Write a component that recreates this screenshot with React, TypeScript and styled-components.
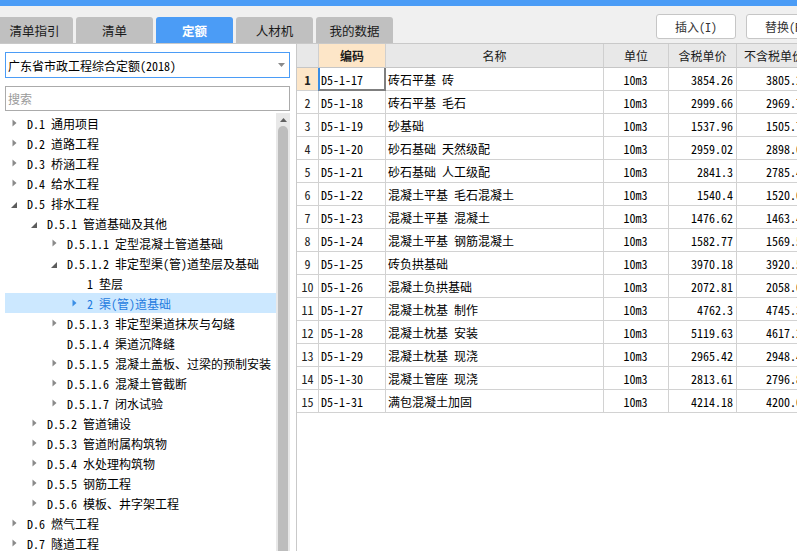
import styled, { createGlobalStyle } from "styled-components";

const FONT = `"Noto Sans Mono CJK SC", "Noto Sans CJK SC", "DejaVu Sans Mono", monospace`;

const GlobalStyle = createGlobalStyle`
  html, body {
    margin: 0;
    padding: 0;
    background: #ffffff;
    overflow: hidden;
  }
  body {
    font-family: ${FONT};
    font-size: 12px;
    color: #000;
  }
  * { box-sizing: border-box; }
`;

type Toggle = "open" | "closed" | "none";
type TreeNode = { level: number; label: string; toggle: Toggle; selected?: boolean };

const tree: TreeNode[] = [
  { level: 0, label: "D.1 通用项目", toggle: "closed" },
  { level: 0, label: "D.2 道路工程", toggle: "closed" },
  { level: 0, label: "D.3 桥涵工程", toggle: "closed" },
  { level: 0, label: "D.4 给水工程", toggle: "closed" },
  { level: 0, label: "D.5 排水工程", toggle: "open" },
  { level: 1, label: "D.5.1 管道基础及其他", toggle: "open" },
  { level: 2, label: "D.5.1.1 定型混凝土管道基础", toggle: "closed" },
  { level: 2, label: "D.5.1.2 非定型渠(管)道垫层及基础", toggle: "open" },
  { level: 3, label: "1 垫层", toggle: "none" },
  { level: 3, label: "2 渠(管)道基础", toggle: "closed", selected: true },
  { level: 2, label: "D.5.1.3 非定型渠道抹灰与勾缝", toggle: "closed" },
  { level: 2, label: "D.5.1.4 渠道沉降缝", toggle: "none" },
  { level: 2, label: "D.5.1.5 混凝土盖板、过梁的预制安装", toggle: "closed" },
  { level: 2, label: "D.5.1.6 混凝土管截断", toggle: "closed" },
  { level: 2, label: "D.5.1.7 闭水试验", toggle: "closed" },
  { level: 1, label: "D.5.2 管道铺设", toggle: "closed" },
  { level: 1, label: "D.5.3 管道附属构筑物", toggle: "closed" },
  { level: 1, label: "D.5.4 水处理构筑物", toggle: "closed" },
  { level: 1, label: "D.5.5 钢筋工程", toggle: "closed" },
  { level: 1, label: "D.5.6 模板、井字架工程", toggle: "closed" },
  { level: 0, label: "D.6 燃气工程", toggle: "closed" },
  { level: 0, label: "D.7 隧道工程", toggle: "closed" },
];

type Quota = { code: string; name: string; unit: string; tax: string; noTax: string };

const rows: Quota[] = [
  { code: "D5-1-17", name: "砖石平基 砖", unit: "10m3", tax: "3854.26", noTax: "3805.21" },
  { code: "D5-1-18", name: "砖石平基 毛石", unit: "10m3", tax: "2999.66", noTax: "2969.75" },
  { code: "D5-1-19", name: "砂基础", unit: "10m3", tax: "1537.96", noTax: "1505.77" },
  { code: "D5-1-20", name: "砂石基础 天然级配", unit: "10m3", tax: "2959.02", noTax: "2898.01" },
  { code: "D5-1-21", name: "砂石基础 人工级配", unit: "10m3", tax: "2841.3", noTax: "2785.44" },
  { code: "D5-1-22", name: "混凝土平基 毛石混凝土", unit: "10m3", tax: "1540.4", noTax: "1520.04" },
  { code: "D5-1-23", name: "混凝土平基 混凝土", unit: "10m3", tax: "1476.62", noTax: "1463.41" },
  { code: "D5-1-24", name: "混凝土平基 钢筋混凝土", unit: "10m3", tax: "1582.77", noTax: "1569.55" },
  { code: "D5-1-25", name: "砖负拱基础", unit: "10m3", tax: "3970.18", noTax: "3920.53" },
  { code: "D5-1-26", name: "混凝土负拱基础", unit: "10m3", tax: "2072.81", noTax: "2058.02" },
  { code: "D5-1-27", name: "混凝土枕基 制作", unit: "10m3", tax: "4762.3", noTax: "4745.31" },
  { code: "D5-1-28", name: "混凝土枕基 安装", unit: "10m3", tax: "5119.63", noTax: "4617.25" },
  { code: "D5-1-29", name: "混凝土枕基 现浇", unit: "10m3", tax: "2965.42", noTax: "2948.45" },
  { code: "D5-1-30", name: "混凝土管座 现浇", unit: "10m3", tax: "2813.61", noTax: "2796.82" },
  { code: "D5-1-31", name: "满包混凝土加固", unit: "10m3", tax: "4214.18", noTax: "4200.04" },
];

const tabs = ["清单指引", "清单", "定额", "人材机", "我的数据"];

export default function App() {
  return (
    <>
      <GlobalStyle />
      <Page>
        <TopBar />
        <Toolbar>
          <Tabs>
            {tabs.map((t) => (
              <Tab key={t} $active={t === "定额"}>
                {t}
              </Tab>
            ))}
          </Tabs>
          <Actions>
            <ToolButton>插入(I)</ToolButton>
            <ToolButton>替换(R)</ToolButton>
          </Actions>
        </Toolbar>
        <Main>
          <LeftPanel>
            <Combo>
              <ComboText>广东省市政工程综合定额(2018)</ComboText>
              <svg width="7" height="4" viewBox="0 0 7 4">
                <path d="M0 0H7L3.5 4Z" fill="#8a8a8a" />
              </svg>
            </Combo>
            <Search placeholder="搜索" />
            <TreeArea>
              <TreeList>
                {tree.map((n) => (
                  <TreeRow key={n.label} $level={n.level} $selected={!!n.selected}>
                    <ToggleBox>
                      {n.toggle === "closed" && (
                        <svg width="5" height="8" viewBox="0 0 5 8">
                          <path d="M0.5 0.5L4.5 4L0.5 7.5Z" fill={n.selected ? "#3a8ee6" : "#8a8a8a"} />
                        </svg>
                      )}
                      {n.toggle === "open" && (
                        <OpenMark width="6" height="6" viewBox="0 0 6 6">
                          <path d="M6 0V6H0Z" fill="#5c5c5c" />
                        </OpenMark>
                      )}
                    </ToggleBox>
                    <NodeLabel>{n.label}</NodeLabel>
                  </TreeRow>
                ))}
              </TreeList>
              <ScrollTrack>
                <ScrollArrow>
                  <svg width="7" height="4" viewBox="0 0 7 4">
                    <path d="M3.5 0L7 4H0Z" fill="#606060" />
                  </svg>
                </ScrollArrow>
                <ScrollThumb />
              </ScrollTrack>
            </TreeArea>
          </LeftPanel>
          <TablePane>
            <Grid>
              <HeadCell />
              <HeadCell $current>编码</HeadCell>
              <HeadCell>名称</HeadCell>
              <HeadCell>单位</HeadCell>
              <HeadCell>含税单价</HeadCell>
              <HeadCell>不含税单价</HeadCell>
              {rows.map((r, i) => (
                <Row key={r.code}>
                  <RowNo $current={i === 0}>{i + 1}</RowNo>
                  <Cell $focused={i === 0}>{r.code}</Cell>
                  <Cell>{r.name}</Cell>
                  <Cell $align="center">{r.unit}</Cell>
                  <Cell $align="right">{r.tax}</Cell>
                  <Cell $align="right">{r.noTax}</Cell>
                </Row>
              ))}
            </Grid>
          </TablePane>
        </Main>
      </Page>
    </>
  );
}

const Page = styled.div`
  width: 797px;
  height: 551px;
  display: flex;
  flex-direction: column;
  overflow: hidden;
`;

const TopBar = styled.div`
  height: 6px;
  flex-shrink: 0;
  background: #4b9cf6;
`;

const Toolbar = styled.div`
  height: 38px;
  flex-shrink: 0;
  display: flex;
  background: #f0f0f0;
  border-bottom: 1px solid #c9c9c9;
`;

const Tabs = styled.div`
  display: flex;
  gap: 3px;
  align-self: flex-end;
  margin-left: -4px;
`;

const Tab = styled.div<{ $active?: boolean }>`
  width: 77px;
  height: 26px;
  display: flex;
  align-items: center;
  justify-content: center;
  border-radius: 3px 3px 0 0;
  background: ${(p) => (p.$active ? "#4b9cf6" : "#c0c0c0")};
  color: ${(p) => (p.$active ? "#ffffff" : "#1a1a1a")};
  font-weight: ${(p) => (p.$active ? 700 : 400)};
  font-size: 12.5px;
`;

const Actions = styled.div`
  display: flex;
  gap: 10px;
  margin-left: 263px;
  padding-top: 8px;
  flex-shrink: 0;
`;

const ToolButton = styled.div`
  width: 80px;
  height: 25px;
  display: flex;
  align-items: center;
  justify-content: center;
  background: #ffffff;
  border: 1px solid #c6c6c6;
  border-radius: 3px;
  color: #333;
  font-size: 12px;
`;

const Main = styled.div`
  flex: 1;
  min-height: 0;
  display: flex;
`;

const LeftPanel = styled.div`
  width: 296px;
  flex-shrink: 0;
  display: flex;
  flex-direction: column;
  padding: 8px 6px 0 5px;
  background: #fff;
`;

const Combo = styled.div`
  height: 26px;
  flex-shrink: 0;
  display: flex;
  align-items: center;
  justify-content: space-between;
  padding: 0 4px 0 2px;
  border: 1px solid #4b9cf6;
`;

const ComboText = styled.span`
  font-size: 12px;
  color: #000;
`;

const Search = styled.input`
  height: 25px;
  flex-shrink: 0;
  margin-top: 8px;
  padding: 0 2px;
  border: 1px solid #ababab;
  border-radius: 0;
  outline: none;
  font-family: ${FONT};
  font-size: 12px;
  &::placeholder {
    color: #9a9a9a;
  }
`;

const TreeArea = styled.div`
  flex: 1;
  min-height: 0;
  margin-top: 2px;
  display: flex;
  overflow: hidden;
`;

const TreeList = styled.div`
  flex: 1;
  display: flex;
  flex-direction: column;
`;

const TreeRow = styled.div<{ $level: number; $selected: boolean }>`
  height: 20px;
  flex-shrink: 0;
  display: flex;
  align-items: center;
  padding-left: ${(p) => 7 + p.$level * 20}px;
  background: ${(p) => (p.$selected ? "#cce8ff" : "transparent")};
  color: ${(p) => (p.$selected ? "#1f7be0" : "#000")};
  white-space: nowrap;
`;

const ToggleBox = styled.span`
  width: 15px;
  flex-shrink: 0;
  display: flex;
  align-items: center;
`;

const OpenMark = styled.svg`
  margin-left: -1px;
  margin-top: 3px;
`;

const NodeLabel = styled.span`
  font-size: 12px;
`;

const ScrollTrack = styled.div`
  width: 14px;
  flex-shrink: 0;
  display: flex;
  flex-direction: column;
  align-items: center;
  background: #e8e8e8;
`;

const ScrollArrow = styled.div`
  height: 13px;
  display: flex;
  align-items: center;
  justify-content: center;
`;

const ScrollThumb = styled.div`
  width: 10px;
  flex: 1;
  background: #bdbdbd;
  border-radius: 5px 5px 0 0;
`;

const TablePane = styled.div`
  flex: 1;
  min-width: 0;
  border-left: 1px solid #c9c9c9;
  overflow: hidden;
  background: #fff;
`;

const Grid = styled.div`
  display: grid;
  grid-template-columns: 22px 67px 218px 65px 68px 75px;
  width: max-content;
`;

const HeadCell = styled.div<{ $current?: boolean }>`
  height: 24px;
  display: flex;
  align-items: center;
  justify-content: center;
  border-right: 1px solid #cfcfcf;
  border-bottom: 1px solid #c6c6c6;
  background: ${(p) => (p.$current ? "#fde6c8" : "#e8e8e8")};
  font-weight: ${(p) => (p.$current ? 700 : 400)};
  font-size: 12px;
  color: #1a1a1a;
  white-space: nowrap;
  overflow: hidden;
`;

const Row = styled.div`
  display: contents;
`;

const RowNo = styled.div<{ $current?: boolean }>`
  height: 23px;
  display: flex;
  align-items: center;
  justify-content: center;
  border-right: 1px solid #d2d2d2;
  border-bottom: 1px solid #d2d2d2;
  background: ${(p) => (p.$current ? "#fde6c8" : "#fff")};
  font-weight: ${(p) => (p.$current ? 700 : 400)};
  color: #222;
`;

const Cell = styled.div<{ $align?: "left" | "center" | "right"; $focused?: boolean }>`
  position: relative;
  height: 23px;
  display: flex;
  align-items: center;
  justify-content: ${(p) =>
    p.$align === "right" ? "flex-end" : p.$align === "center" ? "center" : "flex-start"};
  padding: 0 3px 0 2px;
  border-right: 1px solid #d2d2d2;
  border-bottom: 1px solid #d2d2d2;
  white-space: nowrap;
  overflow: visible;
  color: #000;
  &::after {
    content: "";
    display: ${(p) => (p.$focused ? "block" : "none")};
    position: absolute;
    left: -1px;
    right: -1px;
    top: 0;
    bottom: -1px;
    border-left: 2px solid #3a8ee6;
    border-right: 2px solid #7f7f7f;
    border-bottom: 2px solid #7f7f7f;
  }
`;
